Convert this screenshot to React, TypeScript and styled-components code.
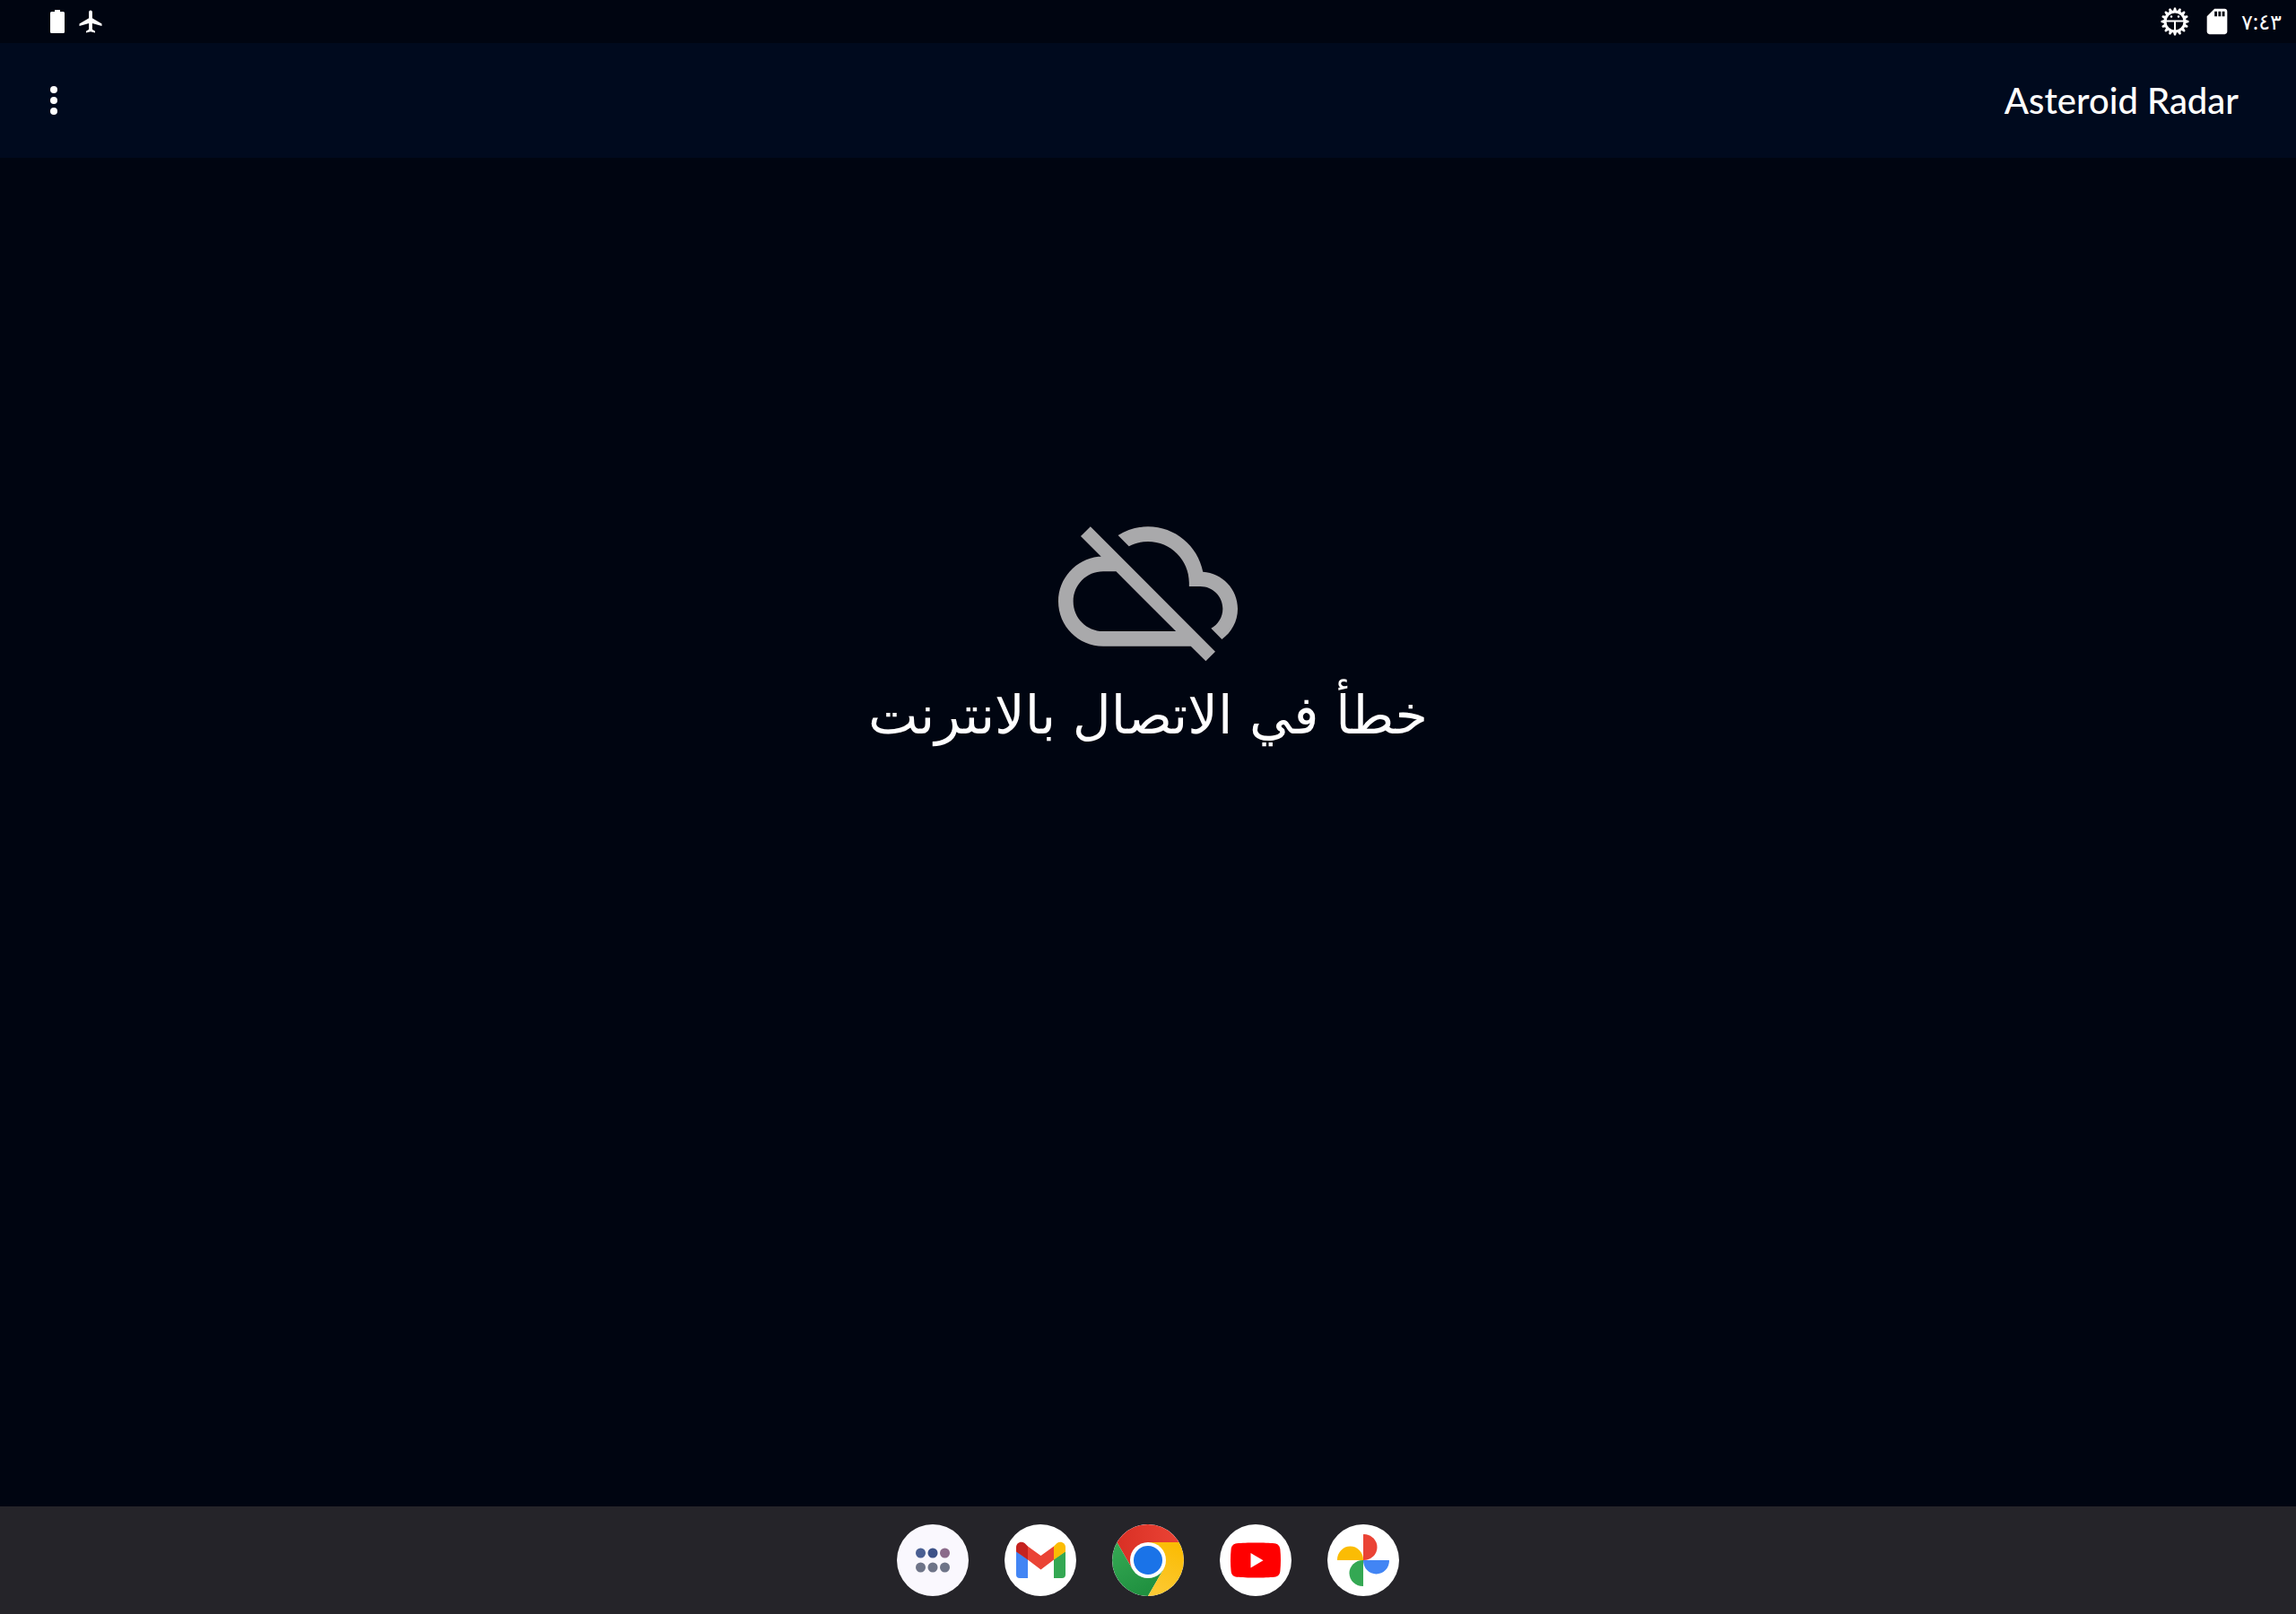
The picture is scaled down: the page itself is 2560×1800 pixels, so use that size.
import React from 'react';
import styled, { createGlobalStyle } from 'styled-components';

const GlobalStyle = createGlobalStyle`
  * { box-sizing: border-box; }
  body { margin: 0; background: #000511; }
`;

const Screen = styled.div`
  min-height: 100vh;
  display: flex;
  flex-direction: column;
  background: #000511;
  color: #fff;
  font-family: "Noto Sans", "DejaVu Sans", sans-serif;
`;

const StatusBar = styled.div`
  display: flex;
  align-items: center;
  justify-content: space-between;
  height: 48px;
  padding: 0 16px 0 52px;
`;

const StatusGroup = styled.div<{ $gap: number }>`
  display: flex;
  align-items: center;
  gap: ${(p) => p.$gap}px;
`;

const Clock = styled.time`
  font-size: 24px;
  line-height: 32px;
  direction: ltr;
`;

const Glyph = styled.svg<{ $size: number }>`
  display: block;
  flex: none;
  width: ${(p) => p.$size}px;
  height: ${(p) => p.$size}px;
  fill: #fff;
`;

const AppBar = styled.header`
  display: flex;
  align-items: center;
  justify-content: space-between;
  height: 128px;
  padding: 0 64px 0 24px;
  background: #000a1e;
`;

const Title = styled.h1`
  margin: 0;
  font-family: Lato, sans-serif;
  font-size: 40px;
  font-weight: 500;
  line-height: 48px;
`;

const MenuButton = styled.button`
  display: flex;
  align-items: center;
  justify-content: center;
  width: 72px;
  height: 96px;
  padding: 0;
  border: 0;
  background: none;
  cursor: pointer;
`;

const Content = styled.main`
  flex: 1;
  display: flex;
  flex-direction: column;
  align-items: center;
  padding-top: 378px;
`;

const CloudOff = styled(Glyph)`
  fill: #a9a9ab;
`;

const Message = styled.p`
  margin: 0;
  font-family: "DejaVu Sans", sans-serif;
  font-size: 59px;
  line-height: 88px;
`;

const Dock = styled.nav`
  display: flex;
  align-items: center;
  justify-content: center;
  gap: 40px;
  height: 120px;
  background: #252429;
`;

const AppButton = styled.button<{ $color: string }>`
  width: 80px;
  height: 80px;
  padding: 0;
  border: 0;
  border-radius: 50%;
  overflow: hidden;
  background: ${(p) => p.$color};
  cursor: pointer;
`;

const teeth = Array.from({ length: 16 }, (_, i) => i * 22.5);

const BatteryIcon = () => (
  <Glyph $size={26} viewBox="0 0 26 26" aria-hidden="true">
    <path d="M9 0h6v2h3.500q1.500 0 1.500 1.500v21q0 1.500-1.500 1.500h-13q-1.500 0-1.500-1.500v-21q0-1.500 1.500-1.500h3.500z" />
  </Glyph>
);

const PlaneIcon = () => (
  <Glyph $size={30} viewBox="0 0 24 24" aria-hidden="true">
    <path d="M22 16v-2l-8.500-5V3.500c0-.83-.67-1.500-1.500-1.500s-1.500.67-1.500 1.500V9L2 14v2l8.500-2.500V19L8 20.500V22l4-1 4 1v-1.500L13.500 19v-5.500L22 16z" />
  </Glyph>
);

const GearIcon = () => (
  <Glyph $size={32} viewBox="-16 -16 32 32" aria-hidden="true">
    {teeth.map((a) => (
      <path key={a} d="M-2.200 -11L-1 -15.500H1L2.200 -11z" transform={`rotate(${a})`} />
    ))}
    <circle r="11" fill="none" stroke="#fff" strokeWidth="3" />
    <path d="M-10 -1.500H10V.5H1V10H-1V.5H-10z" />
    <circle cx="-4" cy="-5.500" r="1.200" />
    <circle cx="4" cy="-5.500" r="1.200" />
  </Glyph>
);

const CardIcon = () => (
  <Glyph $size={34} viewBox="0 0 24 24" aria-hidden="true">
    <path d="M18 2h-8L4.020 8 4 20c0 1.100.9 2 2 2h12c1.100 0 2-.9 2-2V4c0-1.100-.9-2-2-2zm-6 6h-2V4h2v4zm3 0h-2V4h2v4zm3 0h-2V4h2v4z" />
  </Glyph>
);

const Launcher = () => (
  <svg width="80" height="80" viewBox="0 0 80 80" aria-hidden="true">
    <circle cx="26.500" cy="32" r="5.500" fill="#4a5f93" />
    <circle cx="40" cy="32" r="5.500" fill="#3d5288" />
    <circle cx="53.500" cy="32" r="5.500" fill="#8b6a8a" />
    <g fill="#6e7488">
      <circle cx="26.500" cy="48" r="5.500" />
      <circle cx="40" cy="48" r="5.500" />
      <circle cx="53.500" cy="48" r="5.500" />
    </g>
  </svg>
);

const Gmail = () => (
  <svg width="80" height="80" viewBox="0 0 80 80" aria-hidden="true">
    <path d="M13 30l13 9v21h-9q-4 0-4-4z" fill="#4285f4" />
    <path d="M55 39l13-9v26q0 4-4 4h-9z" fill="#34a853" />
    <path d="M26 24.500l14.500 10.500 14.500-10.500v15l-14.500 11-14.500-11z" fill="#ea4335" />
    <path d="M13 30.500v-5c0-5 5.500-7.500 9.500-4.500l3.500 3.500v15z" fill="#c5221f" />
    <path d="M68 30.500v-5c0-5-5.500-7.500-9.500-4.500l-3.500 3.500v15z" fill="#fbbc04" />
  </svg>
);

const Chrome = () => (
  <svg width="80" height="80" viewBox="0 0 80 80" aria-hidden="true">
    <defs>
      <linearGradient id="red" x1="0" x2="1" y1="0" y2="0">
        <stop stopColor="#d93025" />
        <stop offset="1" stopColor="#ea4335" />
      </linearGradient>
      <linearGradient id="green" x1="0.700" x2="0.200" y1="1" y2="0">
        <stop stopColor="#1e8e3e" />
        <stop offset="1" stopColor="#34a853" />
      </linearGradient>
      <linearGradient id="yellow" x1="0.300" x2="0.600" y1="1" y2="0">
        <stop stopColor="#fcc934" />
        <stop offset="1" stopColor="#fbbc04" />
      </linearGradient>
    </defs>
    <path d="M5.360 20A40 40 0 0 1 74.640 20H40L22.680 50z" fill="url(#red)" />
    <path d="M5.360 20L22.680 50 40 60 57.320 50 40 80A40 40 0 0 1 5.360 20z" fill="url(#green)" />
    <path d="M74.640 20A40 40 0 0 1 40 80L57.320 50 40 20z" fill="url(#yellow)" />
    <circle cx="40" cy="40" r="20" fill="#fff" />
    <circle cx="40" cy="40" r="16" fill="#1a73e8" />
  </svg>
);

const YouTube = () => (
  <svg width="80" height="80" viewBox="0 0 80 80" aria-hidden="true">
    <path d="M40 20.500c8 0 16 .2 21 .8 4 .5 6 3 6.400 6.700.8 8 .8 16 0 24-.4 4-2.400 6.300-6.400 6.700-10 1.100-32 1.100-42 0-4-.4-6-2.700-6.400-6.700-.8-8-.8-16 0-24 .4-3.700 2.400-6.200 6.400-6.700 5-.6 13-.8 21-.8z" fill="#f00" />
    <path d="M34.500 32v16.500l14-8.250z" fill="#fff" />
  </svg>
);

const Photos = () => (
  <svg width="80" height="80" viewBox="0 0 80 80" aria-hidden="true">
    <path d="M40 11.500q0-.5.5-.5a15 14.500 0 0 1 0 29h-.5z" fill="#ea4335" />
    <path d="M40 40h28.500q.5 0 .5.500a14.500 15 0 0 1-29 0z" fill="#4285f4" />
    <path d="M40 40v28.500q0 .5-.5.500a15 14.500 0 0 1 0-29z" fill="#34a853" />
    <path d="M40 40h-28.500q-.5 0-.5-.5a14.500 15 0 0 1 29 0z" fill="#fbbc04" />
  </svg>
);

const apps = [
  { name: 'Apps', color: '#faf8fe', Icon: Launcher },
  { name: 'Gmail', color: '#fff', Icon: Gmail },
  { name: 'Chrome', color: '#fff', Icon: Chrome },
  { name: 'YouTube', color: '#fff', Icon: YouTube },
  { name: 'Photos', color: '#fff', Icon: Photos },
];

export default function App() {
  return (
    <Screen>
      <GlobalStyle />
      <StatusBar>
        <StatusGroup $gap={8}>
          <BatteryIcon />
          <PlaneIcon />
        </StatusGroup>
        <StatusGroup $gap={10}>
          <StatusGroup $gap={14}>
            <GearIcon />
            <CardIcon />
          </StatusGroup>
          <Clock>٧:٤٣</Clock>
        </StatusGroup>
      </StatusBar>
      <AppBar>
        <MenuButton aria-label="خيارات">
          <Glyph $size={48} viewBox="0 0 48 48" aria-hidden="true">
            <circle cx="24" cy="12" r="4" />
            <circle cx="24" cy="24" r="4" />
            <circle cx="24" cy="36" r="4" />
          </Glyph>
        </MenuButton>
        <Title>Asteroid Radar</Title>
      </AppBar>
      <Content>
        <CloudOff $size={200} viewBox="0 0 24 24" aria-hidden="true">
          <path d="M24 15c0-2.640-2.050-4.780-4.650-4.960C18.670 6.590 15.640 4 12 4c-1.480 0-2.850.43-4.010 1.170l1.460 1.460C10.210 6.230 11.080 6 12 6c3.040 0 5.500 2.460 5.500 5.500v.5H19c1.660 0 3 1.340 3 3 0 1.130-.64 2.110-1.560 2.620l1.450 1.450C23.160 18.160 24 16.680 24 15zM4.300 4L3 5.270 5.730 8H5.350C2.340 8.360 0 10.910 0 14c0 3.310 2.690 6 6 6h11.730l2 2 1.270-1.270L4.300 4zM7.730 10l8 8H6c-2.210 0-4-1.790-4-4s1.790-4 4-4h1.730z" />
        </CloudOff>
        <Message dir="rtl" lang="ar">خطأ في الاتصال بالانترنت</Message>
      </Content>
      <Dock aria-label="Dock">
        {apps.map(({ name, color, Icon }) => (
          <AppButton key={name} $color={color} aria-label={name}>
            <Icon />
          </AppButton>
        ))}
      </Dock>
    </Screen>
  );
}
